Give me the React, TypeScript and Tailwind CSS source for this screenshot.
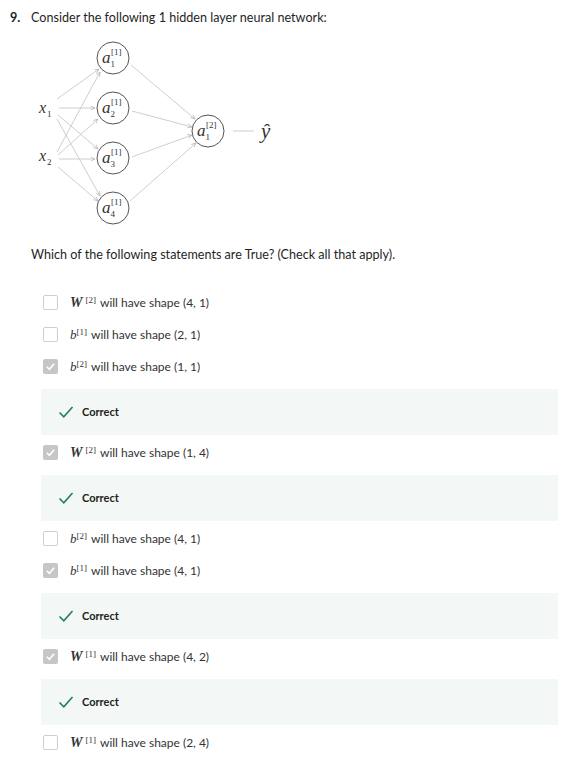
import React from "react";

const sans = { fontFamily: "Lato, 'Noto Sans', sans-serif" };

function Network() {
  const hidden = [56, 106, 156, 206];
  const line = "#c8c8c8";
  return (
    <svg width="260" height="190" viewBox="30 37 260 190" className="block">
      <defs>
        <marker id="ah" markerWidth="6" markerHeight="6" refX="5" refY="3" orient="auto">
          <path d="M0,0.8 L5,3 L0,5.2" fill="none" stroke="#b4b4b4" strokeWidth="0.8" />
        </marker>
      </defs>
      {/* input -> hidden */}
      <g stroke={line} strokeWidth="0.9">
        <line x1="57" y1="97" x2="99" y2="67" markerEnd="url(#ah)" />
        <line x1="59" y1="106" x2="95" y2="106" markerEnd="url(#ah)" />
        <line x1="58" y1="113" x2="98" y2="147" markerEnd="url(#ah)" />
        <line x1="57" y1="117" x2="100" y2="194" markerEnd="url(#ah)" />
        <line x1="57" y1="150" x2="100" y2="70" markerEnd="url(#ah)" />
        <line x1="58" y1="153" x2="98" y2="117" markerEnd="url(#ah)" />
        <line x1="59" y1="157" x2="95" y2="157" markerEnd="url(#ah)" />
        <line x1="58" y1="165" x2="98" y2="199" markerEnd="url(#ah)" />
        {/* hidden -> output */}
        <line x1="131" y1="63" x2="195" y2="117" markerEnd="url(#ah)" />
        <line x1="132" y1="109" x2="192" y2="125" markerEnd="url(#ah)" />
        <line x1="132" y1="155" x2="192" y2="133" markerEnd="url(#ah)" />
        <line x1="130" y1="199" x2="196" y2="141" markerEnd="url(#ah)" />
        <line x1="233" y1="129" x2="254" y2="129" />
      </g>
      <g fontFamily="'Liberation Serif', serif" fill="#333">
        {hidden.map((cy, i) => (
          <g key={cy}>
            <circle cx="113" cy={cy} r="16" fill="white" stroke="#555" strokeWidth="1" />
            <text x="102" y={cy + 5} fontSize="17" fontStyle="italic">a</text>
            <text x="110.5" y={cy + 9} fontSize="9">{i + 1}</text>
            <text x="111" y={cy - 3} fontSize="9">[1]</text>
          </g>
        ))}
        <circle cx="208" cy="129" r="16" fill="white" stroke="#555" strokeWidth="1" />
        <text x="197" y="134" fontSize="17" fontStyle="italic">a</text>
        <text x="205.5" y="138" fontSize="9">1</text>
        <text x="206" y="126" fontSize="9">[2]</text>
        <text x="39" y="111" fontSize="16" fontStyle="italic">x</text>
        <text x="47" y="115" fontSize="9">1</text>
        <text x="39" y="159" fontSize="16" fontStyle="italic">x</text>
        <text x="47" y="163" fontSize="9">2</text>
        <text x="261" y="136" fontSize="21" fontStyle="italic">ŷ</text>
      </g>
    </svg>
  );
}

function Sym({ v, n }: { v: string; n: number }) {
  const isW = v === "W";
  return (
    <span className="mr-1" style={{ fontFamily: "'Liberation Serif', serif" }}>
      <span className={isW ? "text-[14px] font-bold italic" : "text-[13px] italic"}>{v}</span>
      <sup className={isW ? "ml-[3px] text-[9px]" : "text-[9px]"}>[{n}]</sup>
    </span>
  );
}

function Box({ checked }: { checked: boolean }) {
  if (checked)
    return (
      <span className="flex h-[15px] w-[15px] items-center justify-center rounded-[2px] bg-[#c6c6c6]">
        <svg width="11" height="11" viewBox="0 0 12 12">
          <path d="M2 6.3 L4.8 9 L10 3" fill="none" stroke="white" strokeWidth="1.8" />
        </svg>
      </span>
    );
  return <span className="h-[15px] w-[15px] rounded-[2px] border-[1.5px] border-[#cfcfcf] bg-white" />;
}

function Row({ v, n, shape, checked }: { v: string; n: number; shape: string; checked?: boolean }) {
  return (
    <div className="mb-3 flex h-5 items-center pl-[43px]">
      <Box checked={!!checked} />
      <div className="ml-3 flex items-center text-[12px] text-[#333]" style={sans}>
        <Sym v={v} n={n} />
        <span>will have shape {shape}</span>
      </div>
    </div>
  );
}

function Correct() {
  return (
    <div className="mb-2 ml-[41px] flex h-[46px] w-[517px] items-center bg-[#f3f8f7] pl-[17px]">
      <svg width="16" height="14" viewBox="0 0 16 14">
        <path d="M1.5 7.5 L5.8 11.8 L14.5 2" fill="none" stroke="#1f8354" strokeWidth="1.6" />
      </svg>
      <span className="ml-[8px] text-[11px] font-bold text-[#222]" style={sans}>
        Correct
      </span>
    </div>
  );
}

export default function App() {
  return (
    <div className="min-h-[770px] w-[582px] bg-white pt-[9px] text-[#1f1f1f]" style={sans}>
      <div className="flex items-center pl-[10px] text-[12.6px]">
        <span className="w-[21px] font-bold">9.</span>
        <span>Consider the following 1 hidden layer neural network:</span>
      </div>
      <div className="mt-[11px] pl-[30px]">
        <Network />
      </div>
      <p className="mt-[17px] pl-[31px] text-[12.6px]">
        Which of the following statements are True? (Check all that apply).
      </p>
      <div className="mt-[28px]">
        <Row v="W" n={2} shape="(4, 1)" />
        <Row v="b" n={1} shape="(2, 1)" />
        <Row v="b" n={2} shape="(1, 1)" checked />
        <Correct />
        <Row v="W" n={2} shape="(1, 4)" checked />
        <Correct />
        <Row v="b" n={2} shape="(4, 1)" />
        <Row v="b" n={1} shape="(4, 1)" checked />
        <Correct />
        <Row v="W" n={1} shape="(4, 2)" checked />
        <Correct />
        <Row v="W" n={1} shape="(2, 4)" />
      </div>
    </div>
  );
}
